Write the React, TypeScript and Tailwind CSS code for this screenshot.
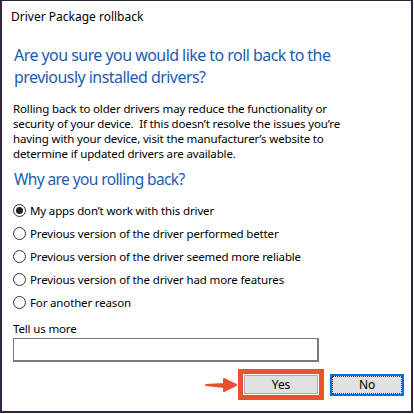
import React from "react";

const Radio = ({ checked, label }: { checked?: boolean; label: string }) => (
  <div className="flex items-center h-[23px]">
    <div className="w-[13px] h-[13px] rounded-full border border-[#333] flex items-center justify-center ml-[13px] mr-[4px]">
      {checked && <div className="w-[7px] h-[7px] rounded-full bg-[#222]" />}
    </div>
    <span>{label}</span>
  </div>
);

export default function App() {
  return (
    <div
      className="w-[414px] h-[414px] bg-white"
      style={{ fontFamily: '"Noto Sans", "Open Sans", sans-serif' }}
    >
      <div className="w-[413px] h-[413px] border-l-2 border-t border-r-2 border-b-2 border-[#2f2340] bg-white text-black text-[11.5px] tracking-[-0.15px] flex flex-col">
        <div className="pl-[9px] pt-[8px] h-[30px] leading-[16px] text-[12px] tracking-normal">Driver Package rollback</div>
        <div className="pl-[12px] pt-[13px] text-[16px] tracking-[-0.55px] leading-[22px] text-[#1c5cb3]">
          Are you sure you would like to roll back to the
          <br />
          previously installed drivers?
        </div>
        <div className="pl-[11px] pt-[13px] leading-[15px]">
          Rolling back to older drivers may reduce the functionality or
          <br />
          security of your device.&nbsp; If this doesn’t resolve the issues you’re
          <br />
          having with your device, visit the manufacturer’s website to
          <br />
          determine if updated drivers are available.
        </div>
        <div className="pl-[12px] pt-[7px] text-[15.5px] tracking-[-0.6px] leading-[22px] text-[#1c5cb3]">
          Why are you rolling back?
        </div>
        <div className="pt-[9px] -ml-[2px]">
          <Radio checked label="My apps don’t work with this driver" />
          <Radio label="Previous version of the driver performed better" />
          <Radio label="Previous version of the driver seemed more reliable" />
          <Radio label="Previous version of the driver had more features" />
          <Radio label="For another reason" />
        </div>
        <div className="pl-[11px] pt-[7px] leading-[16px]">Tell us more</div>
        <div className="pl-[11px] pt-[1px]">
          <div className="w-[306px] h-[24px] border-2 border-[#7a7a7a] border-t border-l bg-white" />
        </div>
        <div className="flex items-center pt-[7px]">
          <svg width="34" height="16" viewBox="0 0 34 16" className="ml-[202px]">
            <path d="M2 8 L20 7 L20 2 L32 8 L20 14 L20 10 Z" fill="#e8502f" stroke="#e8502f" strokeWidth="2" strokeLinejoin="round" />
          </svg>
          <div className="w-[86px] h-[31px] border-[5px] border-[#e9512f] flex items-center justify-center">
            <div className="w-[74px] h-[19px] bg-[#e1e1e1] border border-[#adadad] flex items-center justify-center text-[12px]">
              Yes
            </div>
          </div>
          <div className="ml-[6px] w-[74px] h-[22px] bg-[#e1e1e1] border-2 border-[#0a6fd6] flex items-center justify-center">
            <div className="w-full h-full border border-dotted border-[#333] flex items-center justify-center text-[12px]">
              No
            </div>
          </div>
        </div>
      </div>
    </div>
  );
}
